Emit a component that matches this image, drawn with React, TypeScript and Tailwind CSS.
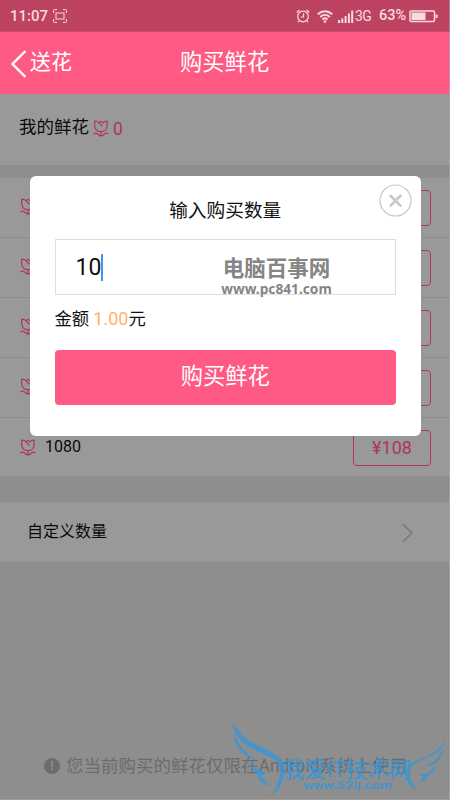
const packs = [
  { id: 1 },
  { id: 2 },
  { id: 3 },
  { id: 4 },
  { id: 5, amount: "1080", price: "¥108" },
];

function Flower() {
  return (
    <svg width="16" height="17" viewBox="0 0 16 17" fill="none" stroke="currentColor" strokeWidth="1.2" strokeLinecap="round" strokeLinejoin="round" className="shrink-0">
      <path d="M7.800 11.600C3.700 11.600 1.700 9 1.700 5.500V1.200c1.800 0 3.400.5 4.400 1.600L9 6M6.100 2.800C6.800 1.900 7.400 1.400 8 1.200c.7.300 1.300.8 1.900 1.600 1-1.100 2.400-1.600 4.200-1.600v4.300c0 3.500-2.200 6.100-6.300 6.100" />
      <path d="M8 11.600v4.200M.8 13.700c1.800-.9 3.200-.5 4.300.8.900.9 1.700 1.400 2.900 1.400s2-.5 2.900-1.400c1.100-1.300 2.500-1.700 4.300-.8" />
    </svg>
  );
}

function StatusBar() {
  return (
    <div className="flex h-8 items-center border-b border-[#d04a6c] bg-[#be4361] pl-2.5 pr-[12px] pt-px text-[#f7d9e0]">
      <span className="w-[38px] whitespace-nowrap text-[15px] font-medium leading-none">11:07</span>
      <svg width="14" height="14" viewBox="0 0 14 14" fill="none" stroke="currentColor" className="ml-[5px]">
        <path d="M.6 4V1.600q0-1 1-1H4M10 .6h2.400q1 0 1 1V4M13.400 10v2.400q0 1-1 1H10M4 13.400H1.600q-1 0-1-1V10" />
        <rect x="3" y="4" width="8" height="6" />
      </svg>
      <svg width="14" height="14" viewBox="0 0 14 14" fill="none" stroke="currentColor" strokeWidth="1.200" className="ml-auto">
        <circle cx="7" cy="7.500" r="5.300" />
        <path d="M7.500 4.500V8H4.700M.7 3.500 3.500 1M10.500 1l2.800 2.500M3 12l-1 1.300M11 12l1 1.300" />
      </svg>
      <svg width="16" height="13" viewBox="0 0 16 13" fill="none" stroke="currentColor" strokeWidth="1.900" className="ml-[7px]">
        <path d="M.8 4.300c4.300-4 10.100-4 14.400 0M3.200 7c2.900-2.700 6.700-2.700 9.600 0M5.500 9.500c1.500-1.400 3.500-1.400 5 0" />
        <circle cx="8" cy="11.500" r="1.300" fill="currentColor" stroke="none" />
      </svg>
      <svg width="16" height="13" viewBox="0 0 16 13" fill="currentColor" className="ml-[5px]">
        <path d="M0 10h2v3H0zM3.300 8.500h2V13h-2zM6.600 6h2v7h-2zM9.900 3.500h2V13h-2zM13.200.5h2V13h-2z" />
      </svg>
      <span className="ml-px w-[18px] whitespace-nowrap text-[14px] leading-none tracking-[-0.5px]">3G</span>
      <span className="ml-[6px] w-[28px] whitespace-nowrap pt-px text-[14.500px] font-medium leading-none">63%</span>
      <svg width="29" height="13" viewBox="0 0 29 13" fill="none" stroke="currentColor" strokeWidth="1.500" className="ml-[2px]">
        <rect x="1" y="1" width="24.500" height="10.500" rx="1.500" />
        <path d="M27.500 4.500v3.500" strokeWidth="2" />
        <path d="M2.500 2.500h14v7.500h-14z" fill="currentColor" stroke="none" />
      </svg>
    </div>
  );
}

function Dialog() {
  return (
    <div className="absolute left-[29.500px] top-[176px] h-[260px] w-[391.500px] rounded-[6px] bg-white px-[25px] text-[#111]">
      <h2 className="pt-[21px] text-center text-[18.700px] leading-7">输入购买数量</h2>
      <button className="absolute right-[9px] top-[8px]">
        <svg width="33" height="33" viewBox="0 0 33 33" fill="none" stroke="#c8c8c8">
          <circle cx="16.500" cy="16.500" r="15.500" strokeWidth="1.200" />
          <path d="m10.800 11 11.400 11.400M22.200 11 10.800 22.400" strokeWidth="2.600" />
        </svg>
      </button>
      <div className="mt-[14px] flex h-[56px] w-[341.500px] items-center border border-[#dedede] pl-[20px]">
        <span className="w-[25px] text-[23px] leading-none">10</span>
        <span className="h-[27px] w-[2px] shrink-0 bg-[#4590fb]" />
      </div>
      <p className="mt-[10px] text-[17.300px] leading-7">
        金额 <span className="text-[18px] text-[#ffb266]">1.00</span>元
      </p>
      <button className="mt-[17px] block h-[55px] w-[341.500px] rounded-[4px] bg-[#ff5a84] pb-0.5 text-[22.300px] leading-none text-white">
        购买鲜花
      </button>
      <div className="absolute left-[191px] top-[80px] w-[112px] whitespace-nowrap text-center font-bold text-[#858585]">
        <p className="text-[21.500px] leading-[26px]">电脑百事网</p>
        <p className="font-['Noto_Sans'] text-[13.700px] leading-[14px]">www.pc841.com</p>
      </div>
    </div>
  );
}

function Watermark() {
  return (
    <svg width="220" height="85" viewBox="0 0 220 85" className="absolute left-[230px] top-[715px] opacity-80" fill="#3397dc">
      <path d="M3 7.500C8 18 17 25 28 30.500 40 36 50 41 53.500 48c3 10-1 25-12 32.500C48 71 52 58 49.500 50 47 44 35 40 24 34.500 12 28 3 20 3 7.500z" />
      <path d="M4 19c5 12 12 21 24 26.500C15 43 4 33 4 19z" />
      <path d="M17 47c6 5 12 9 21 10l-7 3.500c3 4 5 7 9 10.500-8-1-11-6-13-12-3-3-6-7-10-12z" />
      <path d="M215 25c-2 10-10 15-22 19.500-15 6-18 14-6 31-12-5-14-19-8-25 7-8 26-7 36-25.500z" />
      <path d="M213.500 33c-1 11-7 17-18 18.500 7-4 14-8 18-18.500z" />
      <path d="M205.500 51c-1 6-4 8-7 9-1 4-5 7-9 7l4-6-6-1c7 0 13-3 18-9z" />
      <text x="53" y="62" textLength="128" lengthAdjust="spacingAndGlyphs" className="text-[22px] font-medium">我爱IT技术网</text>
      <text x="73" y="74" textLength="89" lengthAdjust="spacingAndGlyphs" className="text-[11.500px] font-bold">www.52ij.com</text>
    </svg>
  );
}

export default function App() {
  return (
    <div className="relative flex h-[800px] w-[450px] flex-col overflow-hidden bg-[#8e8e8e] font-[Roboto,'Noto_Sans_CJK_SC',sans-serif]">
      <StatusBar />
      <header className="flex h-[62px] items-center bg-[#ff5a84] pb-px text-white">
        <svg width="16" height="28" viewBox="0 0 16 28" fill="none" stroke="currentColor" strokeWidth="2.400" className="ml-[11px] mt-0.5">
          <path d="M14.500 1 1.500 14l13 13" />
        </svg>
        <span className="ml-[3px] w-[150px] text-[21px]">送花</span>
        <h1 className="text-[22.300px]">购买鲜花</h1>
      </header>
      <section className="flex h-[71px] items-center bg-[#999] pb-1 pl-[19px] text-[17.500px] text-[#0a0a0a]">
        <span>我的鲜花</span>
        <span className="ml-1 flex items-center gap-1 pt-[3px] text-[#b03654]">
          <span className="pb-0.5"><Flower /></span>
          <span>0</span>
        </span>
      </section>
      <ul className="mt-[13px] h-[298px] bg-[#999]">
        {packs.map((p) => (
          <li key={p.id} className="flex h-[60px] items-center border-b border-[#8c8c8c] pl-[20px] pr-[19px] last:border-b-0">
            <span className="pb-0.5 text-[#b03654]"><Flower /></span>
            {p.amount && <span className="ml-[9px] pb-0.5 text-[16px] text-[#0a0a0a]">{p.amount}</span>}
            <span className="ml-auto flex h-[36px] w-[78px] items-center justify-center rounded-[4px] border-[1.500px] border-[#b03654] pb-0.5 text-[18px] text-[#b03654]">{p.price}</span>
          </li>
        ))}
      </ul>
      <div className="mt-[26px] flex h-[60px] items-center justify-between bg-[#999] pl-[27px] pr-[37px] pt-px text-[16px] text-[#0a0a0a]">
        <span className="pb-0.5">自定义数量</span>
        <svg width="11" height="18" viewBox="0 0 11 18" fill="none" stroke="#777" strokeWidth="1.500">
          <path d="m1 .5 9 8.500-9 8.500" />
        </svg>
      </div>
      <footer className="mt-auto flex items-center pb-[21px] pl-[44px] text-[17.500px] text-[#6c6c6c]">
        <span className="mr-[6px] flex size-4 items-center justify-center rounded-full bg-[#6c6c6c] text-[13px] font-bold text-[#8e8e8e]">!</span>
        您当前购买的鲜花仅限在Android系统上使用
      </footer>
      <Dialog />
      <Watermark />
      <div className="absolute inset-0 border-b border-r border-[#a8a8a8]/60" />
    </div>
  );
}
